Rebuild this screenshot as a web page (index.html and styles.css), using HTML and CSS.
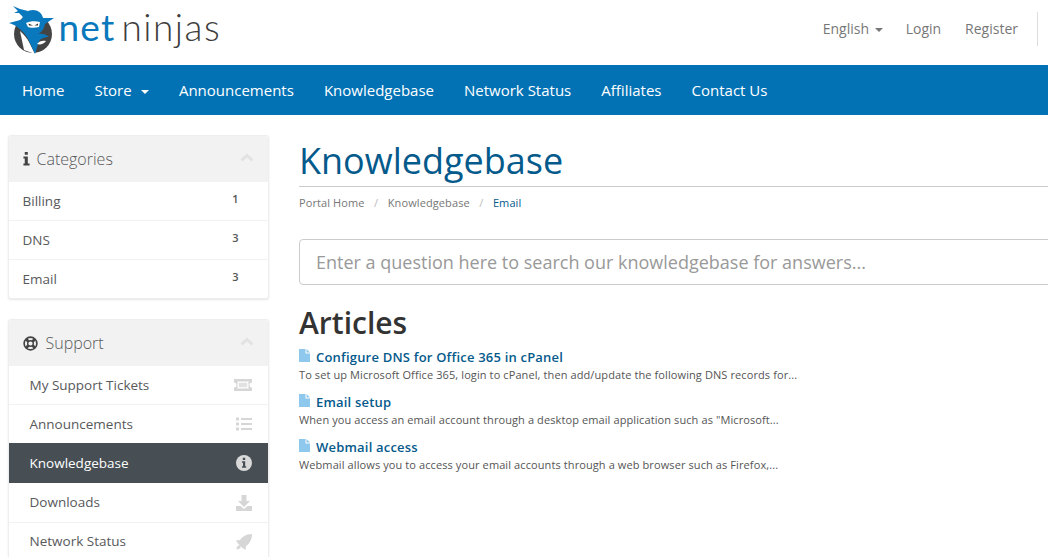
FILE: index.html
```html
<!DOCTYPE html>
<html lang="en">
<head>
<meta charset="utf-8">
<title>Knowledgebase - Net Ninjas</title>
<link rel="stylesheet" href="styles.css">
</head>
<body>
<header class="topbar">
  <a class="logo" href="#">
    <svg class="logo-mark" viewBox="9 5 46 50" width="46" height="50">
      <circle cx="33" cy="34" r="19" fill="#444"/>
      <path fill="#fff" d="M20 31 C24 35 27 38 29 42 L35 54 L24 50 Z"/>
      <path fill="#0a78bd" d="M9 23 L22 19.500 C23 13 28 10 33 10 C38 10 42 13 43 18 L54 18 L45 24 C44 29 42 32 38 34 C42 33 46 34 49 37 C43 37 39 39 38 44 L35 54 L29 41 C27 36 24 33 21 30 C18 27 15 25 9 23 Z"/>
      <path fill="#0a78bd" d="M13 6 L20 9 L28 11 L23 17 L19 13 L14 13 L18 11 Z"/>
      <path fill="#fff" d="M26 23 C30 21 36 21 40 22 L39 27 C35 28 30 28 28 27 Z"/>
      <path fill="#333" d="M28.500 23.500 L33 25.500 L29 25.500 Z M38 23.500 L34.500 25.500 L38 25.500 Z"/>
      <path fill="#fff" d="M37 44 C39 41 43 40 46 41 C44 44 40 45 37 44 Z"/>
    </svg>
    <span class="logo-text"><span class="logo-net">net</span><span class="logo-ninjas">ninjas</span></span>
  </a>
  <nav class="top-links">
    <a class="link-lang" href="#">English <span class="caret caret-grey"></span></a>
    <a class="link-login" href="#">Login</a>
    <a class="link-reg" href="#">Register</a>
    <span class="top-divider"></span>
  </nav>
</header>

<nav class="mainnav">
  <a href="#">Home</a>
  <a href="#">Store <span class="caret caret-white"></span></a>
  <a href="#">Announcements</a>
  <a href="#">Knowledgebase</a>
  <a href="#">Network Status</a>
  <a href="#">Affiliates</a>
  <a href="#">Contact Us</a>
</nav>

<div class="page">
  <aside class="sidebar">
    <section class="panel panel-cat">
      <div class="panel-head">
        <span class="panel-title">
          <svg class="head-icon" viewBox="0 0 8 16" width="7" height="14"><path fill="#444" d="M2 0h3.500v3H2z M0.500 5H5.500V13H7.500V15.500H0.500V13H2V7.500H0.500Z"/></svg>
          Categories
        </span>
        <svg class="chev" viewBox="0 0 14 9" width="14" height="9"><path fill="none" stroke="#e2e2e2" stroke-width="3" d="M1.500 7.500 L7 2.500 L12.500 7.500"/></svg>
      </div>
      <a class="row row-cat" href="#"><span>Billing</span><span class="count">1</span></a>
      <a class="row row-cat" href="#"><span>DNS</span><span class="count">3</span></a>
      <a class="row row-cat" href="#"><span>Email</span><span class="count">3</span></a>
    </section>

    <section class="panel panel-open">
      <div class="panel-head">
        <span class="panel-title">
          <svg class="head-icon" viewBox="0 0 16 16" width="15" height="15"><circle cx="8" cy="8" r="6.800" fill="none" stroke="#444" stroke-width="1.800"/><circle cx="8" cy="8" r="3" fill="none" stroke="#444" stroke-width="1.500"/><path stroke="#444" stroke-width="3" d="M3.200 3.200L5.800 5.800M12.800 3.200L10.200 5.800M3.200 12.800L5.800 10.200M12.800 12.800L10.200 10.200"/></svg>
          Support
        </span>
        <svg class="chev" viewBox="0 0 14 9" width="14" height="9"><path fill="none" stroke="#e2e2e2" stroke-width="3" d="M1.500 7.500 L7 2.500 L12.500 7.500"/></svg>
      </div>
      <a class="row row-sup" href="#"><span>My Support Tickets</span>
        <svg viewBox="0 0 18 12" width="18" height="12"><path fill="#d6d6d6" fill-rule="evenodd" d="M0 0H18V3.500A2.500 2.500 0 0 0 18 8.500V12H0V8.500A2.500 2.500 0 0 0 0 3.500Z M3.500 2.500V9.500H14.500V2.500Z"/><path fill="#e2e2e2" d="M4.800 3.800H13.200V8.200H4.800Z"/></svg>
      </a>
      <a class="row row-sup" href="#"><span>Announcements</span>
        <svg viewBox="0 0 16 14" width="16" height="14"><path fill="#d6d6d6" d="M0 0.500H3V3.500H0Z M0 5.500H3V8.500H0Z M0 10.500H3V13.500H0Z M5 1H16V3H5Z M5 6H16V8H5Z M5 11H16V13H5Z"/></svg>
      </a>
      <a class="row row-sup row-active" href="#"><span>Knowledgebase</span>
        <svg viewBox="0 0 16 16" width="16" height="16"><circle cx="8" cy="8" r="8" fill="#d9d9d9"/><path fill="#474f55" d="M6.800 2.800h2.400v2.200H6.800z M6 6.200h3.200v5H10.200v1.600H6v-1.600h1v-3.400H6z"/></svg>
      </a>
      <a class="row row-sup" href="#"><span>Downloads</span>
        <svg viewBox="0 0 16 16" width="16" height="16"><path fill="#d6d6d6" d="M5.500 0H10.500V6H14L8 12L2 6H5.500Z M0 11H4.500L8 14L11.500 11H16V16H0Z"/></svg>
      </a>
      <a class="row row-sup" href="#"><span>Network Status</span>
        <svg viewBox="0 0 16 16" width="16" height="16"><path fill="#d6d6d6" d="M16 0C16 6 13 10 10 12L9.500 16L6.500 14L2 9.500L0 6.500L4 6C6 3 10 0 16 0Z M0.500 15.500C0.500 13 1.500 12 3 11L5 13C4 14.500 3 15.500 0.500 15.500Z"/></svg>
      </a>
    </section>
  </aside>

  <main class="content">
    <h1 class="page-title">Knowledgebase</h1>
    <ol class="crumbs">
      <li><a href="#">Portal Home</a></li>
      <li class="sep">/</li>
      <li><a href="#">Knowledgebase</a></li>
      <li class="sep">/</li>
      <li class="current">Email</li>
    </ol>
    <div class="search">Enter a question here to search our knowledgebase for answers...</div>
    <h2 class="articles-title">Articles</h2>
    <article class="article">
      <h3><svg viewBox="0 0 11 13" width="11" height="13"><path fill="#8ec8ec" d="M0 0H6.500V4.500H11V13H0Z M7.500 0L11 3.500H7.500Z"/></svg><a href="#">Configure DNS for Office 365 in cPanel</a></h3>
      <p>To set up Microsoft Office 365, login to cPanel, then add/update the following DNS records for...</p>
    </article>
    <article class="article">
      <h3><svg viewBox="0 0 11 13" width="11" height="13"><path fill="#8ec8ec" d="M0 0H6.500V4.500H11V13H0Z M7.500 0L11 3.500H7.500Z"/></svg><a href="#">Email setup</a></h3>
      <p>When you access an email account through a desktop email application such as "Microsoft...</p>
    </article>
    <article class="article">
      <h3><svg viewBox="0 0 11 13" width="11" height="13"><path fill="#8ec8ec" d="M0 0H6.500V4.500H11V13H0Z M7.500 0L11 3.500H7.500Z"/></svg><a href="#">Webmail access</a></h3>
      <p>Webmail allows you to access your email accounts through a web browser such as Firefox,...</p>
    </article>
  </main>
</div>
</body>
</html>
```
FILE: styles.css
```css
* { box-sizing: border-box; }
html, body { margin: 0; padding: 0; height: 557px; overflow: hidden; }
body { font-family: "Open Sans", sans-serif; color: #333; background: #fff; font-size: 14px; }
a { color: inherit; text-decoration: none; }

.topbar { height: 65px; display: flex; justify-content: space-between; align-items: flex-start; }
.logo { display: flex; align-items: flex-start; margin: 5px 0 0 9px; }
.logo-mark { display: block; flex: none; }
.logo-text { font-family: Lato, sans-serif; font-size: 37px; font-weight: 300; line-height: 44px; margin: 0 0 0 3.500px; }
.logo-net { color: #0a78bd; font-weight: 400; margin-right: 6px; letter-spacing: 1.200px; }
.logo-ninjas { color: #3d3d3d; letter-spacing: 1.500px; }

.top-links { display: flex; align-items: center; height: 44px; margin-top: 6px; font-size: 14px; color: #777; }
.link-lang { margin-right: 23px; }
.link-login { margin-right: 24px; }
.link-reg { margin-right: 23px; }
.top-divider { width: 1px; height: 34px; background: #ddd; margin-right: 10px; margin-left: -4px; margin-top: 2px; }

.caret { display: inline-block; width: 0; height: 0; border-left: 4px solid transparent; border-right: 4px solid transparent; border-top: 4px solid; vertical-align: middle; margin-left: 2px; }
.caret-grey { color: #777; }
.caret-white { color: #fff; margin-left: 5.400px; }

.mainnav { height: 50px; background: #0372b5; display: flex; align-items: center; padding-left: 7px; color: #fff; font-size: 15px; }
.mainnav a { padding: 0 15px; line-height: 50px; margin-right: .05px; }

.page { display: flex; align-items: flex-start; padding: 20px 0 0 7.500px; width: 1200px; }
.sidebar { width: 261px; flex: none; }
.panel { background: #fff; border-radius: 3px; border: 1px solid #eee; box-shadow: 0 1px 2px rgba(0,0,0,.1); margin-bottom: 20px; overflow: hidden; }
.panel-head { height: 46px; background: #f2f2f2; display: flex; justify-content: space-between; align-items: center; padding: 0 14px; }
.panel-title { font-size: 16px; font-weight: 300; color: #58595b; display: flex; align-items: center; gap: 8px; }
.panel-cat .panel-title { gap: 7px; }
.chev { margin-top: -3px; }
.head-icon { display: block; }

.row { display: flex; justify-content: space-between; align-items: center; height: 39px; border-top: 1px solid #f1f1f1; font-size: 13.500px; color: #58595b; }
.panel-head + .row { border-top: 0; height: 38px; }
.row-cat { padding: 0 29px 0 14px; }
.row-cat span:first-child { margin-top: -1px; }
.row-sup span { margin-top: -1px; }
.row-sup:last-child span { margin-top: -3px; }
.count { font-size: 11px; font-weight: 600; color: #555; margin-top: -5px; }
.row-sup { padding: 0 16px 0 21px; }
.row-active { background: #474f55; color: #fff; border-top: 0; height: 40px; }
.row-active + .row { border-top: 0; }

.content { width: 880px; flex: none; margin-left: 30.500px; }
.page-title { margin: 3px 0 0; height: 49px; font-size: 36px; line-height: 46px; font-weight: 400; color: #055a8c; border-bottom: 1px solid #ccc; }
.crumbs { list-style: none; display: flex; margin: 8px 0 0; padding: 0; font-size: 11px; line-height: 16px; color: #777; gap: 8px; letter-spacing: .1px; }
.crumbs .sep { color: #bbb; margin: 0 1.500px; }
.crumbs .current { color: #055a8c; }
.search { margin-top: 28px; height: 46px; border: 1px solid #ccc; border-radius: 4px; padding: 0 16px; font-size: 18px; line-height: 44px; color: #999; }
.articles-title { margin: 19px 0 0; font-size: 30px; line-height: 38px; font-weight: 600; color: #333; }
.article { margin: 0; height: 45px; }
.article:first-of-type { margin-top: 6px; }
.article h3 { margin: 0; font-size: 13px; line-height: 18px; font-weight: 600; color: #055a8c; display: flex; align-items: center; gap: 6px; letter-spacing: .2px; }
.article h3 svg { display: block; margin-top: -3px; }
.article p { margin: 1px 0 0; font-size: 11px; line-height: 15px; color: #555; letter-spacing: .1px; }
```
